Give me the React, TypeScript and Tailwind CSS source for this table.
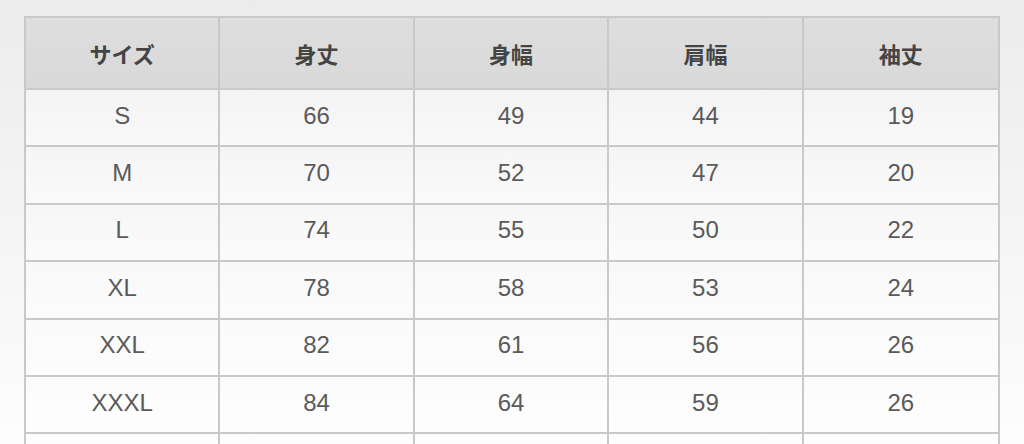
import React from "react";

const headers = ["サイズ", "身丈", "身幅", "肩幅", "袖丈"];
const rows: string[][] = [
  ["S", "66", "49", "44", "19"],
  ["M", "70", "52", "47", "20"],
  ["L", "74", "55", "50", "22"],
  ["XL", "78", "58", "53", "24"],
  ["XXL", "82", "61", "56", "26"],
  ["XXXL", "84", "64", "59", "26"],
  ["", "", "", "", ""],
];

export default function App() {
  return (
    <div className="w-[1024px] h-[444px] overflow-hidden bg-gradient-to-b from-[#ececec] to-[#fdfdfd] pt-4 pl-6">
      <div className="w-[976px] border-2 border-[#c9c9c9]">
        <div className="grid grid-cols-5 h-[72px] border-b-2 border-[#c9c9c9] bg-gradient-to-b from-[#dedede] to-[#d9d9d9]">
          {headers.map((h, i) => (
            <div
              key={h}
              className={`flex items-center justify-center text-[22px] font-bold text-[#444444] ${i < 4 ? "border-r-2 border-[#c9c9c9]" : ""}`}
              style={{ fontFamily: '"Noto Sans CJK JP", "Noto Sans", sans-serif' }}
            >
              {h}
            </div>
          ))}
        </div>
        {rows.map((r, ri) => (
          <div
            key={ri}
            className="grid grid-cols-5 h-[57.4px] border-b-2 border-[#c9c9c9] bg-gradient-to-b from-[rgba(255,255,255,0.25)] to-[rgba(255,255,255,0.55)]"
          >
            {r.map((c, ci) => (
              <div
                key={ci}
                className={`flex items-center justify-center pb-1 text-[24px] text-[#5a5a5a] ${ci < 4 ? "border-r-2 border-[#c9c9c9]" : ""}`}
                style={{ fontFamily: '"Liberation Sans", Arial, sans-serif' }}
              >
                {c}
              </div>
            ))}
          </div>
        ))}
      </div>
    </div>
  );
}
